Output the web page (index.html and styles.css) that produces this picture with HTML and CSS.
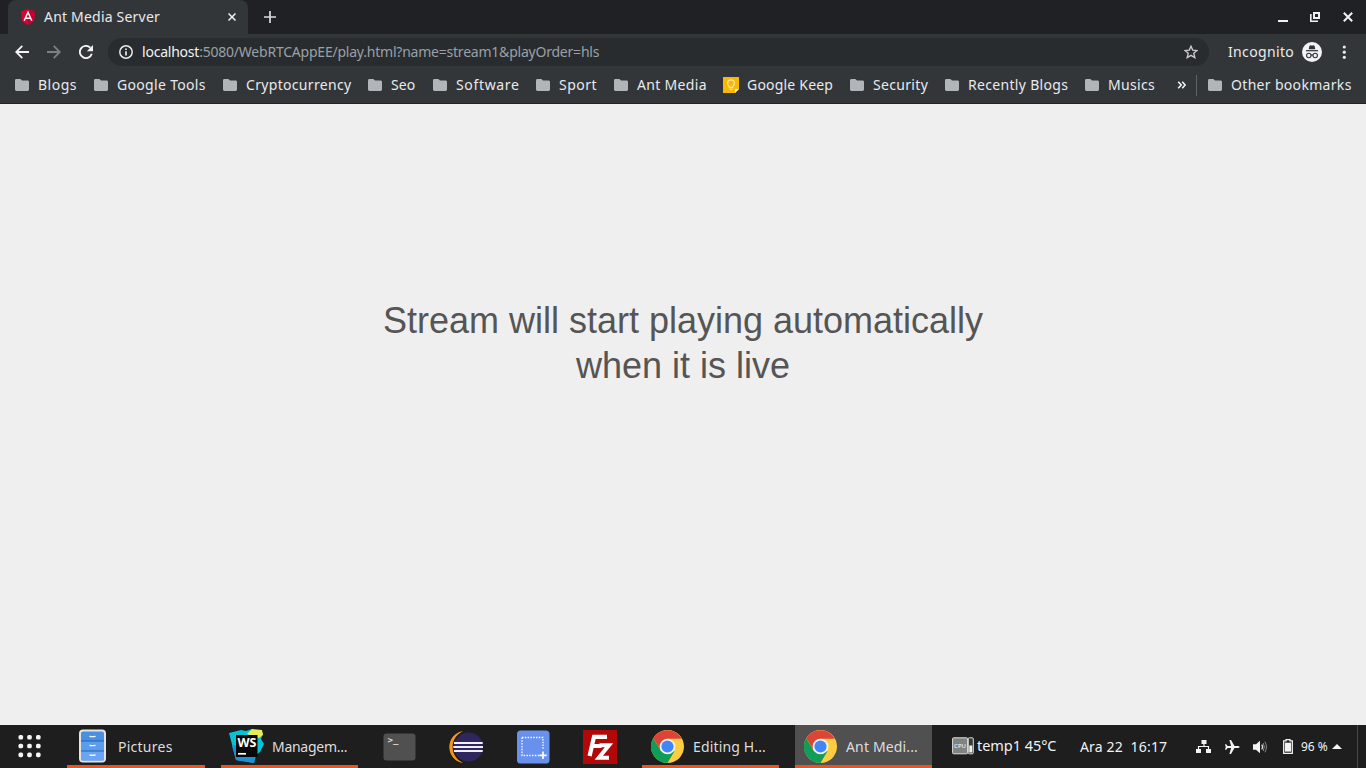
FILE: index.html
```html
<!DOCTYPE html>
<html lang="en">
<head>
<meta charset="utf-8">
<title>Ant Media Server</title>
<link rel="stylesheet" href="styles.css">
</head>
<body>
<svg class="defs" width="0" height="0">
  <symbol id="folder" viewBox="0 0 14 12"><path d="M1.4 0H5.4L7 1.6H12.6Q14 1.6 14 3V10.6Q14 12 12.6 12H1.4Q0 12 0 10.6V1.4Q0 0 1.4 0Z" fill="#b1b5b9"/></symbol>
  <symbol id="chrome" viewBox="0 0 32 32">
    <circle cx="16" cy="16" r="16" fill="#ffcd42"/>
    <path d="M2.1 8A16 16 0 0 1 29.9 8.5L16 8.5L9 19Z" fill="#dc4437"/>
    <path d="M2.1 8A16 16 0 0 0 16 32L23 20L16 23L9.4 19.8Z" fill="#109d58"/>
    <circle cx="16" cy="16" r="7.6" fill="#f3f3f3"/><circle cx="16" cy="16" r="5.9" fill="#4285f4"/>
  </symbol>
</svg>
<header class="browser">
  <div class="tabstrip">
    <div class="tab">
      <svg class="favicon" width="16" height="16" viewBox="0 0 16 16"><path d="M8 0L15 2.5 14 12.2 8 16 2 12.2 1 2.5Z" fill="#dd0031"/><path d="M8 0L15 2.5 14 12.2 8 16Z" fill="#c3002f"/><path d="M4.2 11.8L8 3.3 11.8 11.8M5.8 9.2H10.2" fill="none" stroke="#fff" stroke-width="1.5"/></svg>
      <span class="tab-title">Ant Media Server</span>
      <svg class="tab-close" width="8" height="8" viewBox="0 0 8 8"><path d="M.5 .5L7.5 7.5M7.5 .5L.5 7.5" stroke="#f1f3f4" stroke-width="1.5"/></svg>
    </div>
    <svg class="new-tab" width="12" height="12" viewBox="0 0 12 12"><path d="M6 0V12M0 6H12" stroke="#dadce0" stroke-width="1.7"/></svg>
    <div class="window-buttons">
      <svg width="10" height="10" viewBox="0 0 10 10"><path d="M0 9H10" stroke="#f1f1f1" stroke-width="2"/></svg>
      <svg width="10" height="10" viewBox="0 0 10 10"><path d="M4 1H9V6H4Z" fill="none" stroke="#f1f1f1" stroke-width="2"/><path d="M.8 2V9.2H8" fill="none" stroke="#f1f1f1" stroke-width="1.6"/></svg>
      <svg width="10" height="10" viewBox="0 0 10 10"><path d="M.8 .8L9.2 9.2M9.2 .8L.8 9.2" stroke="#f1f1f1" stroke-width="2"/></svg>
    </div>
  </div>
  <div class="toolbar">
    <svg class="nav-icon" width="14" height="14" viewBox="0 0 14 14"><path d="M14 7H1.5M7.3 .8L1.2 7 7.3 13.2" fill="none" stroke="#f1f3f4" stroke-width="1.8"/></svg>
    <svg class="nav-icon" width="14" height="14" viewBox="0 0 14 14"><path d="M0 7H12.5M6.7 .8L12.8 7 6.7 13.2" fill="none" stroke="#7d8083" stroke-width="1.8"/></svg>
    <svg class="nav-icon" width="14" height="14" viewBox="0 0 14 14"><path d="M12.8 8.8A6.1 6.1 0 1 1 11.3 2.7" fill="none" stroke="#f1f3f4" stroke-width="1.9"/><path d="M14 0V6.2H7.8Z" fill="#f1f3f4"/></svg>
    <div class="address">
      <svg width="14" height="14" viewBox="0 0 14 14"><circle cx="7" cy="7" r="6.2" fill="none" stroke="#e8eaed" stroke-width="1.5"/><path d="M7 6.2V10.4M7 3.4V5" stroke="#e8eaed" stroke-width="1.7"/></svg>
      <span class="url"><b>localhost</b>:5080/WebRTCAppEE/play.html?name=stream1&amp;playOrder=hls</span>
      <svg class="star" width="14" height="14" viewBox="0 0 14 14"><path d="M7 1.2L8.7 5.1 13 5.5 9.8 8.3 10.8 12.6 7 10.3 3.2 12.6 4.2 8.3 1 5.5 5.3 5.1Z" fill="none" stroke="#c8cacd" stroke-width="1.4"/></svg>
    </div>
    <span class="incognito">Incognito</span>
    <svg class="spy" width="20" height="20" viewBox="0 0 20 20"><circle cx="10" cy="10" r="10" fill="#f1f3f4"/><path d="M6.7 7.3L7.5 3.8Q8 3 8.9 3.5H11.1Q12 3 12.5 3.8L13.3 7.3Z" fill="#303438"/><path d="M4 8.7H16" stroke="#303438" stroke-width="1.2"/><g fill="none" stroke="#303438" stroke-width="1.1"><circle cx="6.8" cy="13.5" r="2.2"/><circle cx="13.2" cy="13.5" r="2.2"/><path d="M9 13.2Q10 12.5 11 13.2"/></g></svg>
    <svg class="more" width="4" height="14" viewBox="0 0 4 14" fill="#e8eaed"><circle cx="2.3" cy="2" r="1.6"/><circle cx="2.3" cy="7.2" r="1.6"/><circle cx="2.3" cy="12.3" r="1.6"/></svg>
  </div>
  <nav class="bookmarks">
    <div class="bm short"><svg><use href="#folder"/></svg><span>Blogs</span></div>
    <div class="bm"><svg><use href="#folder"/></svg><span>Google Tools</span></div>
    <div class="bm"><svg><use href="#folder"/></svg><span>Cryptocurrency</span></div>
    <div class="bm seo"><svg><use href="#folder"/></svg><span>Seo</span></div>
    <div class="bm software"><svg><use href="#folder"/></svg><span>Software</span></div>
    <div class="bm short"><svg><use href="#folder"/></svg><span>Sport</span></div>
    <div class="bm"><svg><use href="#folder"/></svg><span>Ant Media</span></div>
    <div class="bm keep"><svg viewBox="0 0 16 16"><path d="M0 0H16V12L12 16H0Z" fill="#f4b909"/><path d="M16 12L12 16V12Z" fill="#fff1bc"/><path d="M6.3 10.3V9.4Q4.6 8.2 4.6 6.2A3.4 3.4 0 0 1 11.4 6.2Q11.4 8.2 9.7 9.4V10.3ZM6.5 12.2H9.5" fill="none" stroke="#ffe7a0" stroke-width="1.2"/></svg><span>Google Keep</span></div>
    <div class="bm"><svg><use href="#folder"/></svg><span>Security</span></div>
    <div class="bm"><svg><use href="#folder"/></svg><span>Recently Blogs</span></div>
    <div class="bm"><svg><use href="#folder"/></svg><span>Musics</span></div>
    <svg class="overflow" width="9" height="8" viewBox="0 0 9 8"><path d="M1.2 .8L4.2 4 1.2 7.2M5.2 .8L8.2 4 5.2 7.2" fill="none" stroke="#f1f3f4" stroke-width="1.6"/></svg>
    <div class="bm other"><svg><use href="#folder"/></svg><span>Other bookmarks</span></div>
  </nav>
</header>
<main class="page"><p>Stream will start playing automatically<br>when it is live</p></main>
<footer class="taskbar">
  <svg class="apps" width="24" height="24" viewBox="0 0 24 24" fill="#f5f5f5"><rect x="0.5" y="1" width="4.6" height="4.6" rx="1.6"/><rect x="9.2" y="1" width="4.6" height="4.6" rx="1.6"/><rect x="18" y="1" width="4.6" height="4.6" rx="1.6"/><rect x="0.5" y="9.7" width="4.6" height="4.6" rx="1.6"/><rect x="9.2" y="9.7" width="4.6" height="4.6" rx="1.6"/><rect x="18" y="9.7" width="4.6" height="4.6" rx="1.6"/><rect x="0.5" y="18.6" width="4.6" height="4.6" rx="1.6"/><rect x="9.2" y="18.6" width="4.6" height="4.6" rx="1.6"/><rect x="18" y="18.6" width="4.6" height="4.6" rx="1.6"/></svg>
  <div class="task pictures">
    <svg width="34" height="34" viewBox="0 0 34 34"><rect x="5" y="1.5" width="25" height="31" rx="3" fill="#4a90e2" stroke="#e6e4e0" stroke-width="2"/><path d="M6 12H29V22H6Z" fill="#5b9cec"/><path d="M6 22H29V31.5H6Z" fill="#6ba4f4"/><path d="M6 12H29M6 22H29" stroke="#2563ad" stroke-width="1.2"/><path d="M14.7 6.8L15.3 7.6H19.7L20.3 6.8M14.7 15.8L15.3 16.6H19.7L20.3 15.8M14.7 25.5L15.3 26.3H19.7L20.3 25.5" fill="none" stroke="#f5f5f5" stroke-width="1.4"/></svg>
    <span>Pictures</span>
  </div>
  <div class="task management">
    <svg width="36" height="36" viewBox="0 0 36 36"><path d="M0 5L12 2 17 3 23 1 34 5 32 11 35 16 31 24 27 27 25 35 7 32 4 20Z" fill="#07c3d5"/><path d="M18 6L23 1 33 2 34 7 30 10 26 9Z" fill="#e8ed55"/><path d="M3 18L8 17V28H26L25 35 7 32Z" fill="#1e8fd6"/><rect x="7" y="7" width="21.5" height="22" fill="#080808"/><text x="17.8" y="18.6" text-anchor="middle" class="ws">WS</text><path d="M9 25.8H17" stroke="#fff" stroke-width="1.7"/></svg>
    <span>Managem...</span>
  </div>
  <div class="launchers">
    <svg width="34" height="28" viewBox="0 0 34 28"><rect x="1.5" y="0.5" width="32" height="27" rx="3" fill="#505050"/><text x="5.5" y="10" class="prompt">&gt;_</text></svg>
    <svg width="36" height="34" viewBox="0 0 36 34"><path d="M14.8 1.2A16 16 0 0 0 14.8 32.8A16.8 16.8 0 0 1 14.8 1.2Z" fill="#f79421"/><path d="M14.8 1.2C-2.5 4.5 -2.5 29.5 14.8 32.8C1.2 26.5 1.2 7.5 14.8 1.2Z" fill="#f79421"/><circle cx="20.6" cy="17" r="14.4" fill="#30265f"/><path d="M6 13H34.7M5.3 17H35M6 21H34.7" stroke="#f1effb" stroke-width="1.9"/></svg>
    <svg width="34" height="34" viewBox="0 0 34 34"><rect x="1" y=".5" width="32.5" height="33" rx="3.5" fill="#6791ed"/><path d="M6 7.5H27V20M6 7.5V25.5H23" fill="none" stroke="#f4f7ff" stroke-width="1.4" stroke-dasharray="1.5 1.3"/><path d="M27 21.5V29M23.3 25.3H30.7" stroke="#fff" stroke-width="1.7"/></svg>
    <svg width="36" height="36" viewBox="0 0 36 36"><rect x="1" y="1" width="34" height="34" fill="#b20808"/><path d="M7.6 27L12 7.8H25M10 17H19.5" fill="none" stroke="#fff" stroke-width="4.2"/><path d="M17.5 16.3H27L16.8 28.8H27" fill="none" stroke="#fff" stroke-width="4"/></svg>
  </div>
  <div class="task chrome editing"><svg width="33" height="33"><use href="#chrome"/></svg><span>Editing H...</span></div>
  <div class="task chrome active"><svg width="33" height="33"><use href="#chrome"/></svg><span>Ant Medi...</span></div>
  <div class="tray">
    <svg class="cpu" width="22" height="18" viewBox="0 0 22 18"><rect x=".6" y=".8" width="15" height="16" rx="1" fill="#818380" stroke="#dfdfdb"/><rect x="16.3" y=".8" width="5" height="16" rx="1" fill="#383b38" stroke="#dfdfdb"/><path d="M17.3 8.5H20.3V15.5H17.3Z" fill="#f2f2ee"/><text x="8" y="11.2" text-anchor="middle" class="cpu-label">CPU</text></svg>
    <span class="temp">temp1 45°C</span>
    <span class="clock">Ara 22&nbsp; 16:17</span>
    <svg class="net" width="16" height="14" viewBox="0 0 16 14"><path d="M5.5 0H10.5V4H5.5ZM0 9H5V13H0ZM10 9H15V13H10Z" fill="#f4f4f4"/><path d="M8 4V6.5M2.5 9V6.5H12.5V9" fill="none" stroke="#f4f4f4" stroke-width="1.2"/></svg>
    <svg class="plane" width="15" height="14" viewBox="0 0 15 14"><path d="M14.6 7Q14.4 6.1 13 6.1H9.5L6 0H4.4L6.1 6.1H2.6L1.2 4.2H0L.8 7 0 9.8H1.2L2.6 7.9H6.1L4.4 14H6L9.5 7.9H13Q14.4 7.9 14.6 7Z" fill="#f4f4f4"/></svg>
    <svg class="sound" width="16" height="14" viewBox="0 0 16 14"><path d="M0 4.2H3L7 .7V13.3L3 9.8H0Z" fill="#f4f4f4"/><path d="M8.7 4.7Q10.5 7 8.7 9.3" fill="none" stroke="#e5e5e5" stroke-width="1.2"/><path d="M10.2 3Q12.5 7 10.2 11M11.9 1.7Q15 7 11.9 12.3" fill="none" stroke="#898989" stroke-width="1"/></svg>
    <svg class="battery" width="10" height="15" viewBox="0 0 10 15"><path d="M.7 1.9H3V.7H7V1.9H9.3V14.3H.7Z" fill="none" stroke="#f4f4f4" stroke-width="1.3"/><path d="M2 3.7H8V12.6H2Z" fill="#f4f4f4"/></svg>
    <span class="percent">96 %</span>
    <svg class="caret" width="10" height="5" viewBox="0 0 10 5"><path d="M0 5L5 0 10 5Z" fill="#f4f4f4"/></svg>
    <i class="edge"></i>
  </div>
</footer>
</body>
</html>
```
FILE: styles.css
```css
* { box-sizing: border-box; }
body { margin: 0; width: 1366px; height: 768px; display: flex; flex-direction: column; overflow: hidden; font-family: "Noto Sans", "Open Sans", sans-serif; color: #e8eaed; white-space: nowrap; }
svg { display: block; flex: none; }
.defs { position: absolute; }
.browser { height: 104px; background: #323639; border-bottom: 1px solid #202326; flex: none; }
.tabstrip { height: 34px; background: #202124; display: flex; align-items: center; padding-left: 8px; }
.tab { width: 240px; height: 34px; background: #323639; border-radius: 8px 8px 0 0; display: flex; align-items: center; padding-left: 12px; }
.tab-title { width: 179px; margin-left: 8px; font-size: 14px; letter-spacing: .2px; padding-bottom: 2px; }
.tab-close { margin-left: 5px; }
.new-tab { margin-left: 16px; }
.window-buttons { display: flex; gap: 22px; margin: 0 13px 0 auto; }
.window-buttons svg:nth-child(2) { margin-right: 1px; }
.toolbar { height: 36px; display: flex; align-items: center; padding-left: 15px; }
.nav-icon { margin-right: 18px; }
.address { width: 1101px; height: 28px; margin-left: -3px; border-radius: 14px; background: #282c2f; display: flex; align-items: center; padding: 0 11px; }
.url { margin-left: 9px; color: #9aa0a6; font-size: 14px; letter-spacing: -.22px; padding-bottom: 2px; }
.url b { font-weight: 400; color: #f1f3f4; }
.star { margin-left: auto; }
.incognito { width: 66px; margin-left: 19px; font-size: 14px; letter-spacing: .35px; padding-bottom: 2px; }
.spy { margin-left: 8px; }
.more { margin-left: 20px; }
.bookmarks { height: 30px; padding-left: 15px; display: grid; align-items: center; grid-template-columns: 79px 129px 145px 65px 103px 78px 109px 127px 95px 140px 92px 19px 170px; }
.bm { display: flex; align-items: center; font-size: 14px; letter-spacing: .32px; }
.bm svg { width: 14px; height: 12px; }
.bm span { margin-left: 9px; padding-bottom: 2px; }
.bm.short { letter-spacing: .5px; }
.bm.seo { letter-spacing: .1px; }
.bm.software { letter-spacing: .65px; }
.bm.keep { letter-spacing: .2px; }
.bm.keep svg { width: 16px; height: 16px; }
.bm.keep span { margin-left: 8px; }
.other { border-left: 1px solid #5f6368; padding-left: 11px; }
.page { flex: 1; background: #efefef; display: flex; justify-content: center; align-items: center; padding-bottom: 144px; }
.page p { margin: 0; text-align: center; color: #555; font: 36px/45px "Liberation Sans", sans-serif; }
.taskbar { height: 43px; background: #1e1e1e; display: flex; }
.apps { margin: 9px 25px 0 18px; }
.task { height: 43px; border-bottom: 3px solid #e95420; display: flex; align-items: center; font-size: 14px; color: #ddd; padding-top: 2px; }
.pictures { width: 138px; padding-left: 8px; letter-spacing: .25px; }
.pictures span { margin-left: 9px; }
.management { width: 137px; margin-left: 16px; padding-left: 8px; letter-spacing: -.28px; }
.management span { margin-left: 7px; }
.launchers { display: flex; align-items: center; width: 284px; padding-left: 24px; gap: 32px; }
.chrome { width: 137px; padding-left: 9px; letter-spacing: .15px; }
.chrome span { margin-left: 9px; }
.active { margin-left: 16px; background: #505050; }
.tray { flex: 1; display: flex; align-items: center; color: #f2f2f2; }
.cpu { margin-left: 20px; margin-bottom: 2px; }
.temp { width: 79px; margin-left: 3px; font-size: 14.5px; letter-spacing: -.05px; padding-bottom: 3px; }
.clock { width: 88px; margin-left: 24px; font-size: 14px; letter-spacing: .17px; }
.net { margin-left: 28px; }
.plane { margin-left: 13px; }
.sound { margin-left: 13px; }
.battery { margin-left: 14px; }
.percent { width: 26px; margin-left: 8px; font-size: 12px; }
.caret { margin-left: 5px; }
.edge { width: 1px; height: 43px; margin-left: 15px; background: #484848; }
.ws { font: bold 12.5px "Open Sans", sans-serif; fill: #fff; }
.prompt { font: bold 9px "DejaVu Sans Mono", monospace; fill: #ddd; }
.cpu-label { font: 6px "Noto Sans", sans-serif; fill: #fff; }
```
